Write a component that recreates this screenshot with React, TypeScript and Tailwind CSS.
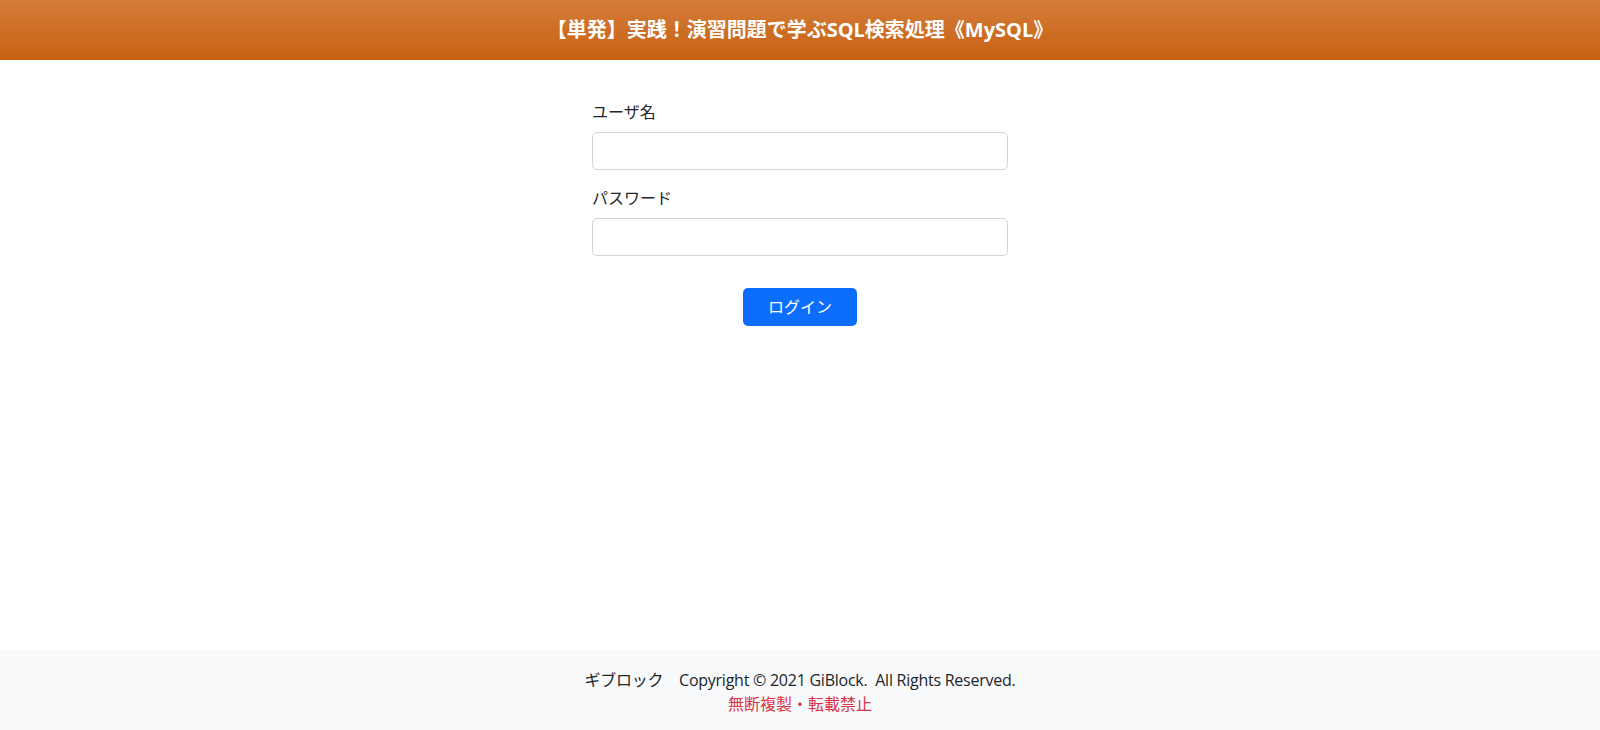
export default function App() {
  return (
    <div
      className="min-h-screen flex flex-col bg-white text-[#212529]"
      style={{ fontFamily: '"Open Sans", "Noto Sans CJK JP", sans-serif' }}
    >
      {/* Header */}
      <header className="h-[60px] flex items-center justify-center bg-linear-to-b from-[#d47c38] to-[#c7610d]">
        <h1 className="text-white text-[20px] font-bold leading-none">
          【単発】実践！演習問題で学ぶSQL検索処理《MySQL》
        </h1>
      </header>

      {/* Login form */}
      <main className="flex-1 pt-10">
        <form className="w-[416px] mx-auto" onSubmit={(e) => e.preventDefault()}>
          <div className="mb-4">
            <label className="block mb-2 text-[16px] leading-6">ユーザ名</label>
            <input
              type="text"
              className="block w-full h-[38px] px-3 border border-[#ced4da] rounded-[5px] bg-white outline-none"
            />
          </div>
          <div className="mb-4">
            <label className="block mb-2 text-[16px] leading-6">パスワード</label>
            <input
              type="password"
              className="block w-full h-[38px] px-3 border border-[#ced4da] rounded-[5px] bg-white outline-none"
            />
          </div>
          <div className="flex justify-center pt-4">
            <button
              type="submit"
              className="w-[114px] h-[38px] bg-[#0d6efd] text-white text-[16px] rounded-[5px] hover:bg-[#0b5ed7]"
            >
              ログイン
            </button>
          </div>
        </form>
      </main>

      {/* Footer */}
      <footer className="h-[80px] bg-[#f8f9fa] pt-[18px] text-center text-[16px] leading-6">
        <p className="tracking-[-0.25px]">ギブロック　Copyright © 2021 GiBlock.&nbsp; All Rights Reserved.</p>
        <p className="text-[#d63347]">無断複製・転載禁止</p>
      </footer>
    </div>
  );
}
